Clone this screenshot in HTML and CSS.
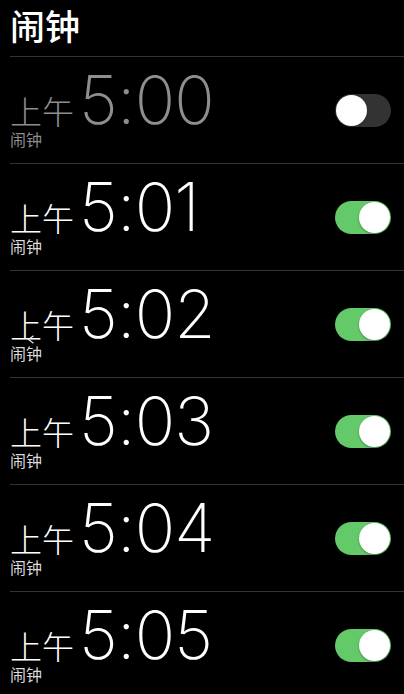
FILE: index.html
```html
<!DOCTYPE html>
<html lang="zh">
<head>
<meta charset="utf-8">
<link rel="stylesheet" href="styles.css">
</head>
<body>
<div class="app">
  <h1 class="title">闹钟</h1>
  <ul class="list">
    <li class="row off">
      <div class="info">
        <div class="timeline"><span class="ampm">上午</span><span class="time">5:00</span></div>
        <div class="label">闹钟</div>
      </div>
      <span class="switch"><span class="knob"></span></span>
    </li>
    <li class="row">
      <div class="info">
        <div class="timeline"><span class="ampm">上午</span><span class="time">5:01</span></div>
        <div class="label">闹钟</div>
      </div>
      <span class="switch on"><span class="knob"></span></span>
    </li>
    <li class="row">
      <div class="info">
        <div class="timeline"><span class="ampm">上午</span><span class="time">5:02</span></div>
        <div class="label">闹钟</div>
      </div>
      <svg class="chev" width="8" height="9" viewBox="0 0 8 9"><path d="M6.5 0.8 L1.5 4.5 L6.5 8.2" fill="none" stroke="#e6e6e6" stroke-width="1.2"/></svg>
      <span class="switch on"><span class="knob"></span></span>
    </li>
    <li class="row">
      <div class="info">
        <div class="timeline"><span class="ampm">上午</span><span class="time">5:03</span></div>
        <div class="label">闹钟</div>
      </div>
      <span class="switch on"><span class="knob"></span></span>
    </li>
    <li class="row">
      <div class="info">
        <div class="timeline"><span class="ampm">上午</span><span class="time">5:04</span></div>
        <div class="label">闹钟</div>
      </div>
      <span class="switch on"><span class="knob"></span></span>
    </li>
    <li class="row">
      <div class="info">
        <div class="timeline"><span class="ampm">上午</span><span class="time">5:05</span></div>
        <div class="label">闹钟</div>
      </div>
      <span class="switch on"><span class="knob"></span></span>
    </li>
  </ul>
</div>
</body>
</html>
```
FILE: styles.css
```css
html, body {
  margin: 0;
  padding: 0;
  background: #000;
}
body {
  width: 404px;
  height: 694px;
  overflow: hidden;
  font-family: "Noto Sans CJK SC", "Noto Sans", sans-serif;
  color: #fff;
}
.app {
  padding-left: 10px;
}
.title {
  margin: 0;
  height: 56px;
  font-size: 35px;
  font-weight: 500;
  line-height: 50px;
  border-bottom: 1px solid #333;
}
.list {
  margin: 0;
  padding: 0;
  list-style: none;
}
.row {
  position: relative;
  height: 106px;
  border-bottom: 1px solid #333;
  display: flex;
  align-items: center;
  justify-content: space-between;
  padding-right: 13px;
}
.info {
  align-self: flex-start;
  padding-top: 14px;
}
.timeline {
  display: flex;
  align-items: baseline;
  height: 58px;
}
.ampm {
  font-size: 32px;
  font-weight: 300;
  line-height: 28px;
  margin-right: 5px;
}
.time {
  font-family: Inter, Roboto, "Liberation Sans", sans-serif;
  font-weight: 200;
  font-size: 67px;
  line-height: 58px;
  letter-spacing: -0.8px;
}
.label {
  font-size: 16px;
  line-height: 20px;
  color: #dcdcdc;
}
.off .ampm, .off .time, .off .label {
  color: #8e8e8e;
}
.switch {
  position: relative;
  display: block;
  width: 56px;
  height: 33px;
  border-radius: 17px;
  background: #333;
}
.switch.on {
  background: #63c969;
}
.knob {
  position: absolute;
  top: 1px;
  left: 1px;
  width: 31px;
  height: 31px;
  border-radius: 50%;
  background: #fff;
  box-shadow: 0 1px 2px rgba(0,0,0,0.35);
}
.switch.on .knob {
  left: auto;
  right: 1px;
}
.chev {
  position: absolute;
  left: 17px;
  top: 64px;
}
```
